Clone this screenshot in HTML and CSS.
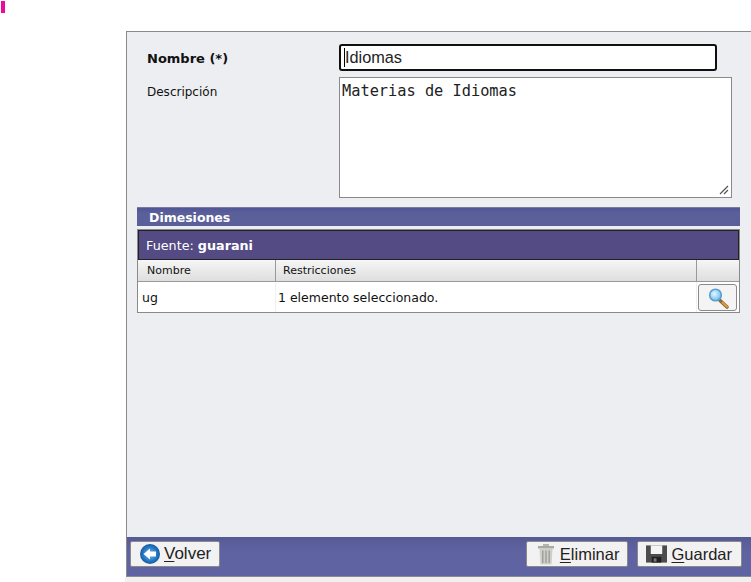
FILE: index.html
```html
<!DOCTYPE html>
<html lang="es">
<head>
<meta charset="utf-8">
<title>Dimensiones</title>
<link rel="stylesheet" href="styles.css">
</head>
<body>
<div class="top"><span class="mark"></span></div>
<main class="panel">
  <div class="form">
    <div class="row row-name">
      <label class="lbl lbl-strong">Nombre (*)</label>
      <div class="field name-field"><span class="caret"></span>Idiomas</div>
    </div>
    <div class="row row-desc">
      <label class="lbl">Descripción</label>
      <div class="field desc-field">Materias de Idiomas
        <svg class="grip" width="10" height="10" viewBox="0 0 10 10"><path d="M1 9L9 1M5 9L9 5" stroke="#555" stroke-width="1.2" fill="none"/></svg>
      </div>
    </div>
  </div>
  <h2 class="section">Dimesiones</h2>
  <section class="box">
    <div class="source">Fuente: <b>guarani</b></div>
    <div class="head">
      <div class="c1">Nombre</div>
      <div class="c2">Restricciones</div>
      <div class="c3"></div>
    </div>
    <div class="data">
      <div class="c1">ug</div>
      <div class="c2">1 elemento seleccionado.</div>
      <div class="c3">
        <button class="lens" type="button" aria-label="Buscar">
          <svg width="24" height="24" viewBox="0 0 24 24">
            <defs><radialGradient id="gl" cx="0.4" cy="0.4" r="0.6"><stop offset="0" stop-color="#e6f6ff"/><stop offset="1" stop-color="#6ec1ee"/></radialGradient></defs>
            <path d="M14 14.5l7 6.5" stroke="#8a6a3a" stroke-width="3.6" stroke-linecap="round"/>
            <path d="M16.5 16.5l4.5 4.2" stroke="#e09a3a" stroke-width="2" stroke-linecap="round"/>
            <circle cx="9.5" cy="9" r="5.8" fill="url(#gl)" stroke="#5a9fd0" stroke-width="1.6"/>
          </svg>
        </button>
      </div>
    </div>
  </section>
  <div class="spacer"></div>
  <footer class="bar">
    <button class="btn btn-back" type="button">
      <svg width="20" height="20" viewBox="0 0 20 20">
        <defs><radialGradient id="gb" cx="0.5" cy="0.5" r="0.55"><stop offset="0" stop-color="#7ab8e8"/><stop offset="0.6" stop-color="#2a7cc8"/><stop offset="1" stop-color="#0d4f98"/></radialGradient></defs>
        <circle cx="10" cy="10" r="10" fill="url(#gb)"/>
        <path d="M3.5 10L10 4.5V7.5H16V12.5H10V15.5Z" fill="#fff"/>
      </svg>
      <span><u>V</u>olver</span>
    </button>
    <div class="bar-right">
      <button class="btn btn-del" type="button">
        <svg width="20" height="22" viewBox="0 0 20 22">
          <path d="M2 3H18V5.5H2Z" fill="#a8a8a4"/>
          <path d="M7 1H13V3H7Z" fill="#b5b5b0"/>
          <path d="M3.5 6H16.5L15.5 21.5H4.5Z" fill="#cfcfca"/>
          <path d="M6.8 7.5V20M10 7.5V20M13.2 7.5V20" stroke="#9a9a95" stroke-width="1.3"/>
        </svg>
        <span><u>E</u>liminar</span>
      </button>
      <button class="btn" type="button">
        <svg width="21" height="20" viewBox="0 0 22 20">
          <path d="M0 1H22V19H0Z" fill="#4c4c4c"/>
          <path d="M5 1H17V10H5Z" fill="#f4f4f4"/>
          <path d="M6 13H16V19H6Z" fill="#1f1f1f"/>
          <path d="M8 14.5H11V18H8Z" fill="#777"/>
        </svg>
        <span><u>G</u>uardar</span>
      </button>
    </div>
  </footer>
</main>
<div class="strip"></div>
</body>
</html>
```

FILE: styles.css
```css
html, body { margin: 0; padding: 0; }
body { width: 751px; height: 582px; overflow: hidden; background: #fff; font-family: "DejaVu Sans", Verdana, sans-serif; color: #111; }
.top { height: 31px; }
.mark { display: block; width: 4px; height: 12px; margin-left: 1px; padding-top: 1px; background: #f0089a; background-clip: content-box; }
.panel { margin-left: 126px; height: 546px; box-sizing: border-box; display: flex; flex-direction: column; background: #eceef2; border-top: 1px solid #8a8a8a; border-left: 1px solid #8a8a8a; }
.strip { margin-left: 125px; height: 5px; background: #f0f0f0; }
.form { padding: 12px 0 0 20px; }
.row { display: flex; }
.lbl { width: 192px; font-size: 12px; }
.lbl-strong { font-size: 13px; font-weight: bold; line-height: 29px; }
.row-desc { margin-top: 4px; }
.row-desc .lbl { line-height: 31px; }
.field { box-sizing: border-box; background: #fff; }
.name-field { width: 378px; height: 27px; border: 2px solid #101010; border-radius: 3px; font: 16.3px/23px "Liberation Sans", Arial, sans-serif; padding-left: 3px; color: #222; display: flex; }
.caret { width: 1px; height: 19px; margin-top: 2px; background: #000; }
.desc-field { position: relative; width: 393px; height: 121px; border: 1px solid #8a8a8a; font: 15.3px/19px "DejaVu Sans Mono", monospace; padding: 4px 2px; color: #222; }
.grip { position: absolute; right: 2px; bottom: 2px; }
.section { margin: 9px 10px 0; width: 603px; box-sizing: border-box; height: 19px; padding-left: 12px; font-size: 12.5px; line-height: 20px; font-weight: bold; color: #fff; background: linear-gradient(#4f5597, #5c6099 30%, #5a5f9a); border-top: 1px solid #7a7a9a; }
.box { margin: 3px 10px 0; width: 603px; box-sizing: border-box; border: 1px solid #8a8a8a; background: #fff; font-size: 12.5px; }
.source { height: 30px; box-sizing: border-box; border: 1px solid #222; background: #544a84; color: #fff; font-size: 12.75px; line-height: 29px; padding-left: 7px; }
.head { display: flex; height: 22px; line-height: 21px; background: linear-gradient(#f6f6f6, #dedede); border-bottom: 1px solid #999; font-size: 11px; box-sizing: border-box; }
.head .c1, .head .c2 { border-right: 1px solid #999; box-sizing: border-box; }
.head .c1 { width: 138px; padding-left: 9px; }
.head .c2 { width: 421px; padding-left: 7px; }
.head .c3 { flex: 1; }
.data { display: flex; height: 30px; }
.data .c1 { width: 138px; box-sizing: border-box; padding-left: 4px; line-height: 32px; border-right: 1px solid #f0f0f0; }
.data .c2 { width: 421px; box-sizing: border-box; padding-left: 2px; line-height: 32px; border-right: 1px solid #f0f0f0; }
.data .c3 { flex: 1; padding: 2px 0 0 1px; }
.lens { width: 39px; height: 27px; padding: 0; display: flex; align-items: center; justify-content: center; background: #f4f4f4; border: 1px solid #8a8a8a; border-radius: 3px; }
.spacer { flex: 1; }
.bar { height: 40px; box-sizing: border-box; display: flex; justify-content: space-between; align-items: flex-start; padding: 4px 9px 0 3px; background: linear-gradient(#565a94, #6063a2 40%); border-bottom: 1px solid #8a8a8a; }
.bar-right { display: flex; gap: 9px; }
.btn { height: 26px; display: flex; align-items: center; gap: 4px; padding: 0 9px 0 8px; background: #f2f2f2; border: 1px solid #8a8a8a; border-radius: 2px; font: 16.5px "Liberation Sans", Arial, sans-serif; color: #222; }
.btn-back { padding: 0 8px 0 9px; font-size: 17px; }
.btn-del { padding: 0 8px 0 9px; }
.btn u { text-underline-offset: 2px; }
```
